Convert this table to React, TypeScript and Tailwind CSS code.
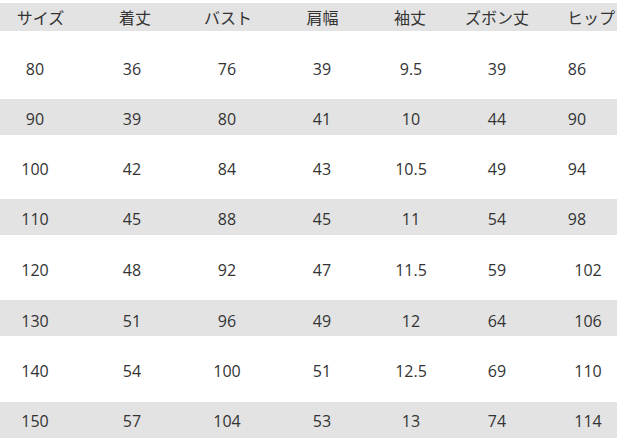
import React from "react";

const headers = ["サイズ", "着丈", "バスト", "肩幅", "袖丈", "ズボン丈", "ヒップ"];

const data: string[][] = [
  ["80", "36", "76", "39", "9.5", "39", "86"],
  ["90", "39", "80", "41", "10", "44", "90"],
  ["100", "42", "84", "43", "10.5", "49", "94"],
  ["110", "45", "88", "45", "11", "54", "98"],
  ["120", "48", "92", "47", "11.5", "59", "102"],
  ["130", "51", "96", "49", "12", "64", "106"],
  ["140", "54", "100", "51", "12.5", "69", "110"],
  ["150", "57", "104", "53", "13", "74", "114"],
];

const rowClasses = [
  "h-[68px] pt-[8px] bg-white",
  "h-[36px] pt-[4px] bg-[#e3e3e3]",
  "h-[64px] pt-[4px] bg-white",
  "h-[36px] pt-[4px] bg-[#e3e3e3]",
  "h-[65px] pt-[5px] bg-white",
  "h-[36px] pt-[6px] bg-[#e3e3e3]",
  "h-[66px] pt-[4px] bg-white",
  "h-[36px] pt-[2px] bg-[#e3e3e3]",
];

const colWidths = [
  "w-[70px]",
  "w-[124px]",
  "w-[66px]",
  "w-[124px]",
  "w-[54px]",
  "w-[118px]",
  "w-[42px]",
];

const headerShift = [
  "pl-[11px]",
  "pl-[6px]",
  "pl-[2px]",
  "pl-[1px]",
  "pr-[2px]",
  "pl-[0px]",
  "pl-[28px]",
];

export default function App() {
  return (
    <div className="w-[617px] h-[440px] bg-white text-[#333333] text-[16px] leading-none overflow-hidden">
      <div className="h-[3px]" />
      <div
        className="flex h-[28px] items-center bg-[#e3e3e3]"
        style={{ fontFamily: '"Noto Sans CJK JP", sans-serif' }}
      >
        {headers.map((h, i) => (
          <div key={i} className={`${colWidths[i]} ${headerShift[i]} flex shrink-0 justify-center whitespace-nowrap`}>
            {h}
          </div>
        ))}
      </div>
      {data.map((row, r) => (
        <div
          key={r}
          className={`flex items-center ${rowClasses[r]}`}
          style={{ fontFamily: '"Open Sans", "Noto Sans CJK JP", sans-serif' }}
        >
          {row.map((v, i) => (
            <div
              key={i}
              className={`${colWidths[i]} ${i === 6 && v.length === 3 ? "pl-[22px]" : ""} flex shrink-0 justify-center whitespace-nowrap`}
            >
              {v}
            </div>
          ))}
        </div>
      ))}
    </div>
  );
}
